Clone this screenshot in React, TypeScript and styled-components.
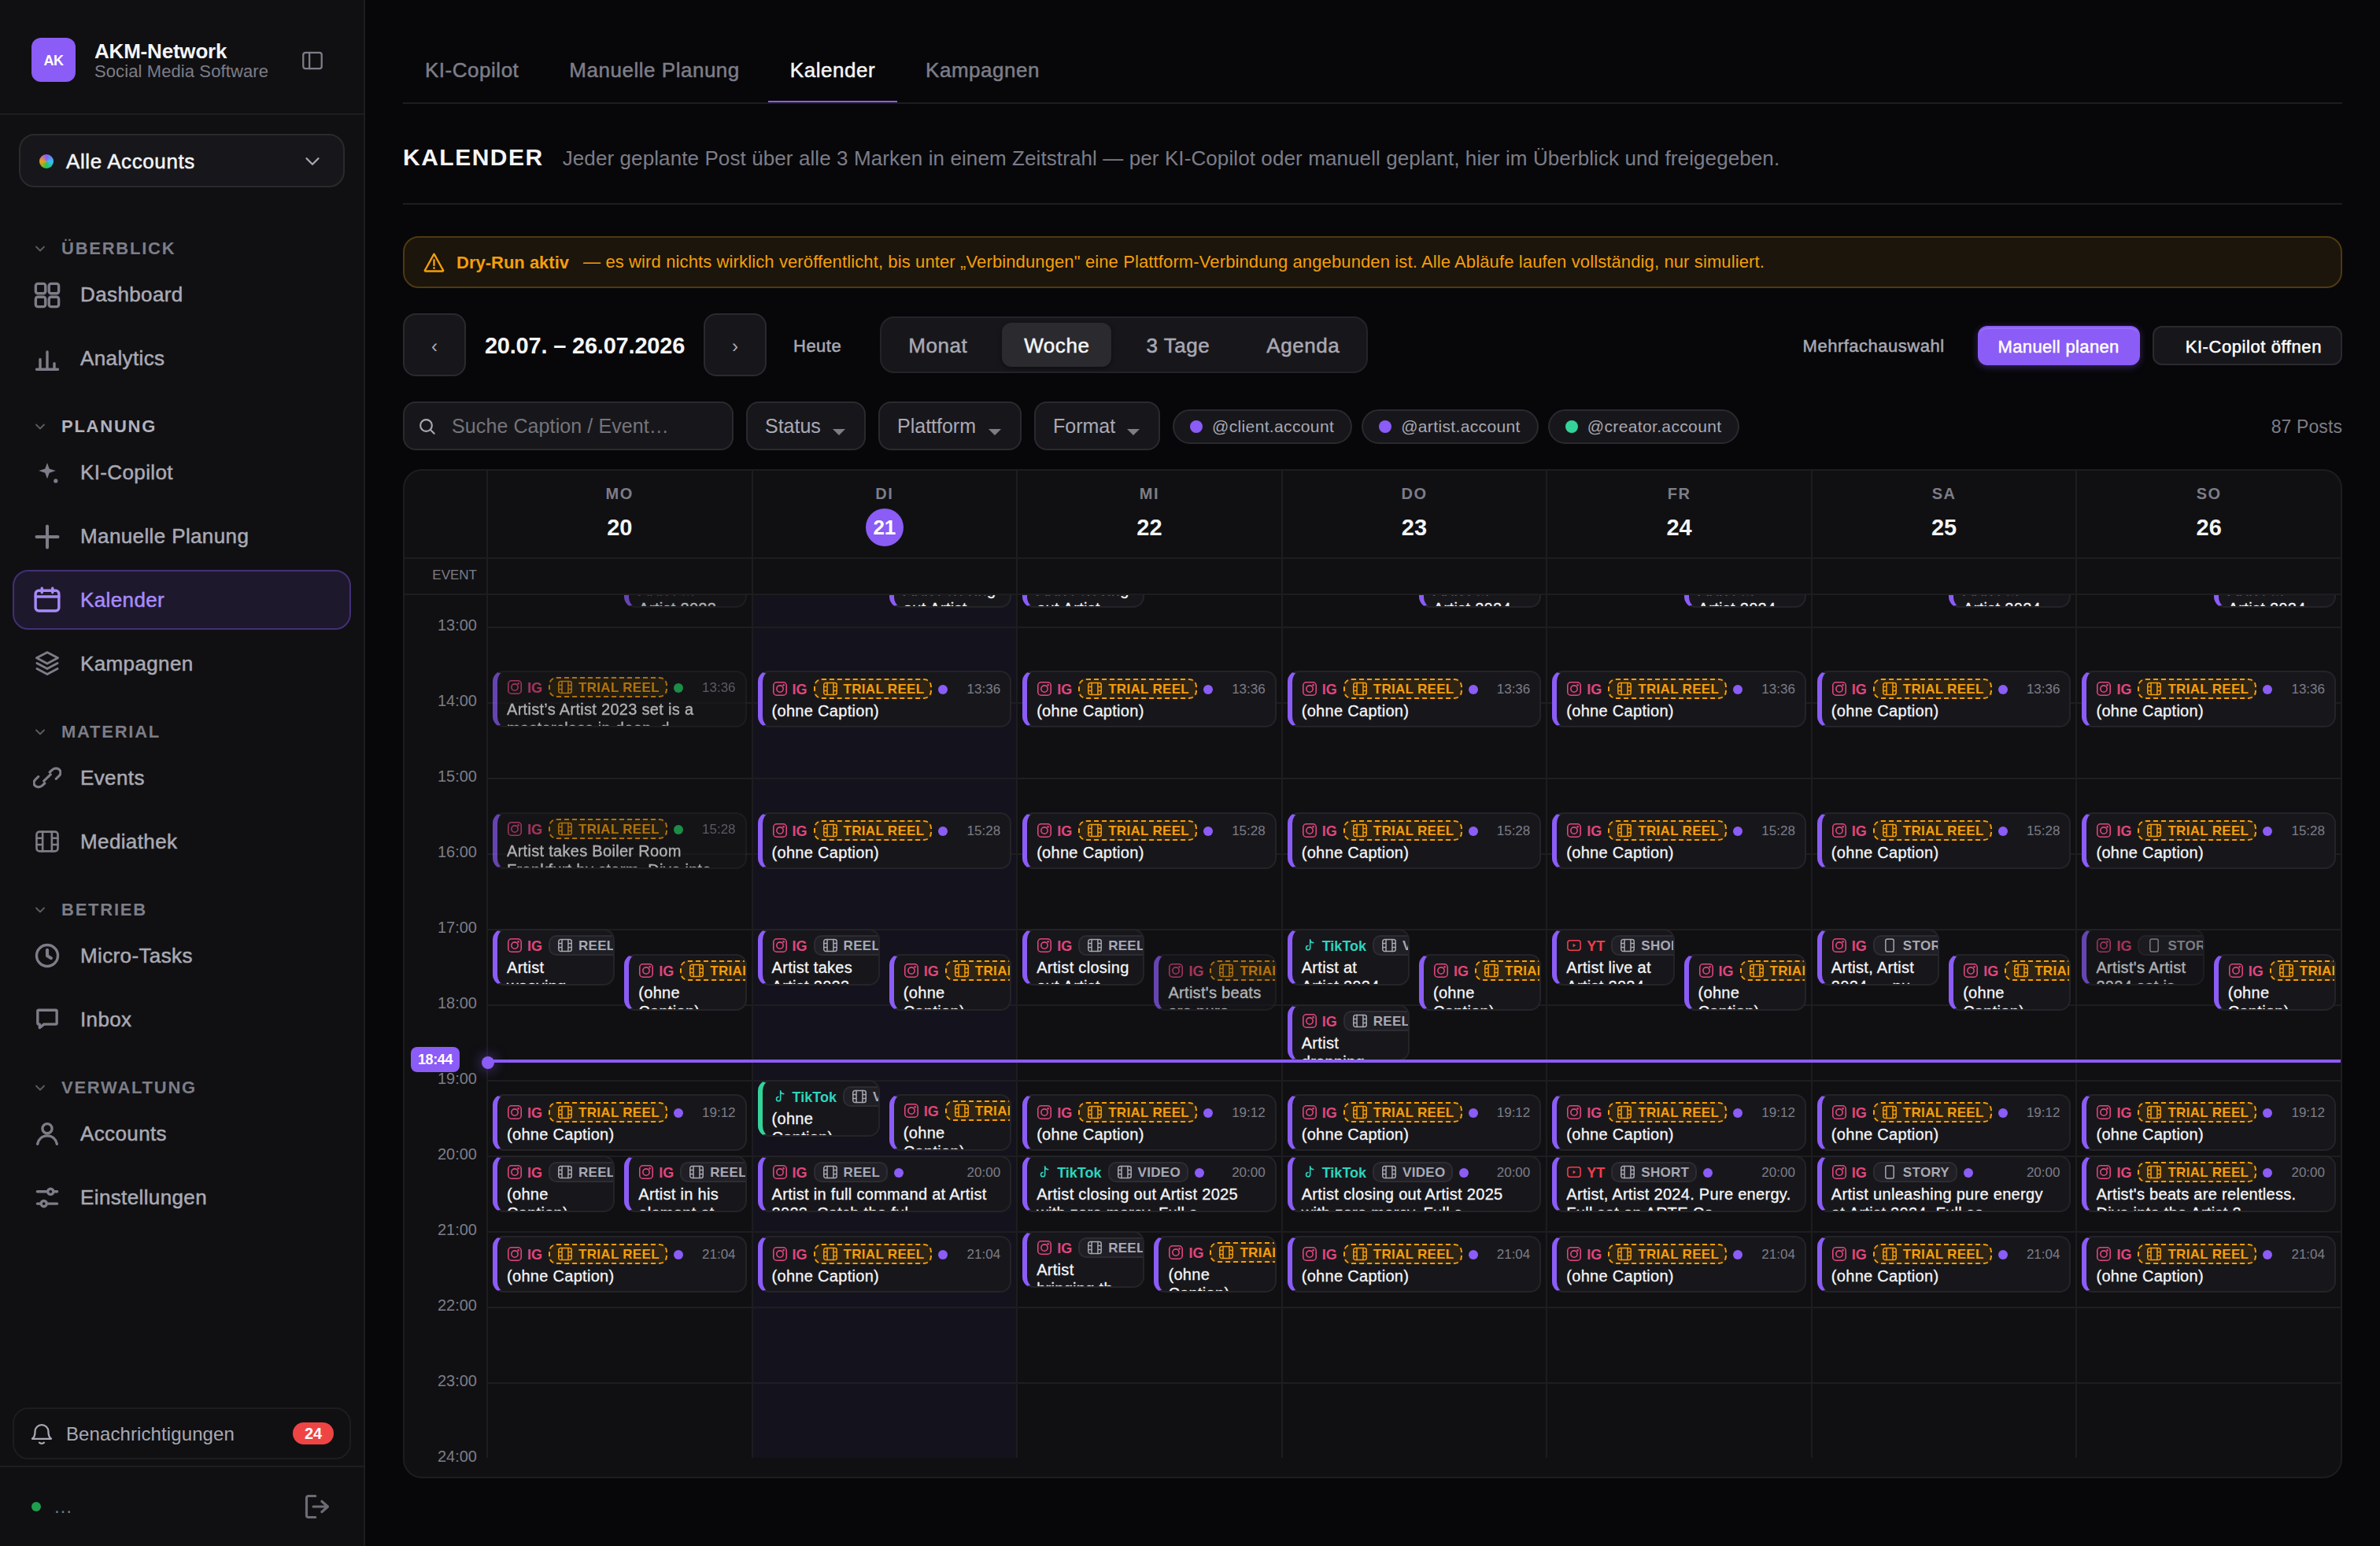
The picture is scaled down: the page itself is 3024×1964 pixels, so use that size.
import React from 'react';
import styled, { createGlobalStyle, css } from 'styled-components';

const colors = {
  page: '#070709',
  panel: '#101012',
  raised: '#17171b',
  line: '#1d1d20',
  lineStrong: '#2a2a2e',
  text: '#f5f5f7',
  soft: '#a9a9b4',
  muted: '#7d7d88',
  accent: '#8b5cf6',
  accentSoft: '#a78bfa',
  amber: '#f59e0b',
  green: '#34d399',
};

const GlobalStyle = createGlobalStyle`
  * { box-sizing: border-box; }
  html, body { margin: 0; background: ${colors.page}; }
  body {
    font-family: "Liberation Sans", Arial, sans-serif;
    color: ${colors.text};
    overflow: hidden;
  }
  svg { display: block; flex: none; }
`;

const medium = css`
  -webkit-text-stroke: 0.5px currentColor;
`;

/* ---------- icons ---------- */

const iconPaths: Record<string, React.ReactNode> = {
  grid: (
    <>
      <rect x="1.5" y="1.5" width="5.5" height="5.5" rx="1.2" />
      <rect x="9" y="1.5" width="5.5" height="5.5" rx="1.2" />
      <rect x="1.5" y="9" width="5.5" height="5.5" rx="1.2" />
      <rect x="9" y="9" width="5.5" height="5.5" rx="1.2" />
    </>
  ),
  chart: <path d="M2 13.9h12M4 13.9V8.2M8 13.9V4M12 13.9v-3.4" />,
  spark: (
    <>
      <path
        d="M8 2.2l1.2 3.3 3.6 1.2-3.6 1.2L8 11.2 6.8 7.9 3.2 6.7l3.6-1.2z"
        fill="currentColor"
        stroke="none"
      />
      <circle cx="12.8" cy="12.4" r="1.15" fill="currentColor" stroke="none" />
    </>
  ),
  plus: <path d="M8 2v12M2 8h12" strokeWidth="1.8" />,
  calendar: (
    <>
      <rect x="1.4" y="2.8" width="13.2" height="11.4" rx="1.8" />
      <path d="M1.4 6.2h13.2M5 1.4v2.5M11 1.4v2.5" />
    </>
  ),
  layers: (
    <path d="M8 1.7l6 3.1-6 3.2-6-3.2zM2.2 7.8L8 10.9l5.8-3.1M2.2 10.9L8 14l5.8-3.1" strokeWidth="1.3" />
  ),
  link: (
    <path
      d="M6.1 9.8L9.9 6.2M3 7.4L1.4 8.9C.2 10 .2 11.6 1.1 12.5c1 1 2.8 1 4 0l1.5-1.4M13 8.6l1.6-1.5c1.2-1.1 1.2-2.7.3-3.6-1-1-2.8-1-4 0L9.4 4.9"
      strokeWidth="1.4"
    />
  ),
  film: (
    <>
      <rect x="2" y="2.5" width="12" height="11" rx="1.6" />
      <path d="M5.4 2.5v11M10.6 2.5v11M2 6.1h3.4M2 9.8h3.4M10.6 6.1H14M10.6 9.8H14" />
    </>
  ),
  clock: (
    <>
      <circle cx="8" cy="8" r="6" />
      <path d="M8 4.8v3.3l2.2 1.3" strokeWidth="1.8" />
    </>
  ),
  chat: <path d="M3.2 2.8h9.6a.6.6 0 0 1 .6.6v6.7a.6.6 0 0 1-.6.6H6.2l-2.5 2v-2h-.5a.6.6 0 0 1-.6-.6V3.4a.6.6 0 0 1 .6-.6z" />,
  user: (
    <>
      <circle cx="8" cy="5.2" r="2.7" />
      <path d="M2.5 13.9c.7-2.9 2.8-4.6 5.5-4.6s4.8 1.7 5.5 4.6" />
    </>
  ),
  sliders: (
    <>
      <path d="M2.4 4.8h5.8M11.5 4.8h2.1M2.4 11.6h2.1M7.7 11.6h5.9" />
      <circle cx="9.9" cy="4.8" r="1.6" />
      <circle cx="6.1" cy="11.6" r="1.6" />
    </>
  ),
  logout: <path d="M7 2H3a1 1 0 0 0-1 1v10a1 1 0 0 0 1 1h4M5.8 8h8M10.6 5l3.4 3-3.4 3" />,
  sidebar: (
    <>
      <rect x="1.3" y="2.2" width="13.4" height="11.6" rx="1.6" />
      <path d="M5.8 2.2v11.6" />
    </>
  ),
  chevron: <path d="M3 5.5l5 5 5-5" />,
  bell: (
    <>
      <path d="M1.6 11.6h12.8c-1.4-1-1.9-2.4-1.9-5A4.5 4.5 0 0 0 8 2.2a4.5 4.5 0 0 0-4.5 4.4c0 2.6-.5 4-1.9 5z" />
      <path d="M6.4 14.2c.9.8 2.3.8 3.2 0" />
    </>
  ),
  warning: (
    <>
      <path d="M8 1.6l6.9 12.3a.4.4 0 0 1-.4.6H1.5a.4.4 0 0 1-.4-.6z" />
      <path d="M8 6v4M8 12v.3" />
    </>
  ),
  search: (
    <>
      <circle cx="7" cy="7" r="4.9" />
      <path d="M10.8 10.8l3 3" />
    </>
  ),
  ig: (
    <>
      <rect x="0.7" y="0.7" width="14.6" height="14.6" rx="3.6" />
      <circle cx="8" cy="8" r="3.7" />
      <circle cx="12.1" cy="3.8" r="0.5" fill="currentColor" />
    </>
  ),
  yt: (
    <>
      <rect x="0.8" y="2.5" width="14.4" height="11" rx="2.6" />
      <path d="M6.8 6l3.2 2-3.2 2z" fill="currentColor" stroke="none" />
    </>
  ),
  tiktok: <path d="M8.6 1.6v9.2a2.3 2.3 0 1 1-2.3-2.3M8.6 1.6c.3 2 1.5 3.2 3.6 3.4" />,
  filmSmall: (
    <>
      <rect x="0.7" y="1.3" width="14.6" height="13.4" rx="2.2" />
      <path d="M4.5 1.3v13.4M11.5 1.3v13.4M.7 5.7h3.8M.7 10.3h3.8M11.5 5.7h3.8M11.5 10.3h3.8" />
    </>
  ),
  phone: <rect x="3.4" y="0.8" width="9.2" height="14.4" rx="1.8" />,
};

const Icon = ({ name, size, stroke = 1.4 }: { name: string; size: number; stroke?: number }) => (
  <svg
    width={size}
    height={size}
    viewBox="0 0 16 16"
    fill="none"
    stroke="currentColor"
    strokeWidth={stroke}
    strokeLinecap="round"
    strokeLinejoin="round"
  >
    {iconPaths[name]}
  </svg>
);

/* ---------- sidebar ---------- */

const Shell = styled.div`
  display: flex;
  width: 3024px;
  height: 1964px;
  background: ${colors.page};
`;

const Sidebar = styled.aside`
  display: flex;
  flex-direction: column;
  flex: none;
  width: 464px;
  background: ${colors.panel};
  border-right: 2px solid ${colors.line};
`;

const Brand = styled.div`
  display: flex;
  align-items: center;
  height: 146px;
  padding: 8px 51px 0 40px;
  border-bottom: 2px solid ${colors.line};
`;

const BrandMark = styled.div`
  display: grid;
  place-items: center;
  width: 56px;
  height: 56px;
  margin-right: 24px;
  padding-top: 2px;
  border-radius: 12px;
  background: ${colors.accent};
  color: #fff;
  font-size: 18px;
  font-weight: 700;
  letter-spacing: -0.6px;
`;

const BrandText = styled.div`
  flex: 1;
  padding-top: 3px;
  line-height: 26px;
  white-space: nowrap;
  font-size: 22px;
  letter-spacing: 0.1px;
  color: ${colors.muted};

  strong {
    display: block;
    font-size: 26px;
    letter-spacing: -0.2px;
    color: ${colors.text};
  }
`;

const BrandToggle = styled.span`
  padding-top: 2px;
  color: ${colors.muted};
`;

const AccountSelect = styled.div`
  display: flex;
  align-items: center;
  height: 68px;
  margin: 24px 24px 0;
  padding: 2px 27px 0 24px;
  border: 2px solid ${colors.lineStrong};
  border-radius: 20px;
  background: ${colors.raised};
  font-size: 26px;
  letter-spacing: 0.6px;
  ${medium}

  span { flex: 1; }
  svg { color: ${colors.soft}; }
`;

const RainbowDot = styled.i`
  width: 18px;
  height: 18px;
  margin-right: 16px;
  border-radius: 50%;
  background: conic-gradient(#8b5cf6, #38bdf8, #22c55e, #f59e0b, #8b5cf6);
`;

const Nav = styled.nav`
  flex: 1;
  padding: 62px 16px 0;
`;

const NavGroup = styled.div`
  display: flex;
  flex-direction: column;
  gap: 4px;
  margin-bottom: 32.5px;
`;

const NavHeading = styled.div<{ $bright?: boolean }>`
  display: flex;
  align-items: center;
  gap: 19px;
  height: 32px;
  padding-left: 27px;
  font-size: 22px;
  font-weight: 700;
  letter-spacing: 1.75px;
  color: ${(p) => (p.$bright ? '#b2b2bd' : colors.muted)};

  svg { color: #5c5c64; }
`;

const NavItem = styled.div<{ $active?: boolean }>`
  display: flex;
  align-items: center;
  gap: 24px;
  height: 76.75px;
  padding: 1px 24px 0;
  border: 2px solid ${(p) => (p.$active ? '#432f75' : 'transparent')};
  border-radius: 20px;
  background: ${(p) => (p.$active ? '#1e182d' : 'transparent')};
  color: ${(p) => (p.$active ? colors.accentSoft : colors.soft)};
  font-size: 26px;
  letter-spacing: 0.38px;
  ${medium}

  svg { color: ${(p) => (p.$active ? colors.accentSoft : colors.muted)}; }
`;

const Notifications = styled.div`
  display: flex;
  align-items: center;
  height: 66px;
  margin: 0 16px 8px;
  padding: 0 20px;
  border: 2px solid ${colors.line};
  border-radius: 20px;
  font-size: 24px;
  color: ${colors.soft};

  span { flex: 1; margin-left: 16px; padding-top: 1px; letter-spacing: 0.1px; }
`;

const CountBadge = styled.b`
  display: grid;
  place-items: center;
  width: 52px;
  height: 28px;
  border-radius: 14px;
  background: #ef4444;
  color: #fff;
  font-size: 20px;
`;

const SidebarFooter = styled.div`
  display: flex;
  align-items: center;
  height: 102px;
  padding: 0 41px 0 40px;
  border-top: 2px solid ${colors.line};
  color: ${colors.muted};
  font-size: 24px;

  span { flex: 1; margin-left: 16px; }
  svg { color: #6c6c75; }
`;

const OnlineDot = styled.i`
  width: 12px;
  height: 12px;
  border-radius: 50%;
  background: #1f9f4e;
`;

/* ---------- main column ---------- */

const Main = styled.main`
  flex: 1;
  min-width: 0;
  padding: 46px 48px 0;
`;

const Tabs = styled.div`
  display: flex;
  gap: 8px;
  height: 86px;
  border-bottom: 2px solid ${colors.line};
`;

const Tab = styled.div<{ $active?: boolean }>`
  display: flex;
  align-items: center;
  padding: 5px 28px 0;
  border-bottom: 2px solid ${(p) => (p.$active ? colors.accent : 'transparent')};
  color: ${(p) => (p.$active ? colors.text : colors.muted)};
  font-size: 26px;
  letter-spacing: 0.52px;
  white-space: nowrap;
  ${medium}
`;

const PageHeader = styled.header`
  display: flex;
  align-items: baseline;
  gap: 24px;
  height: 128px;
  padding-top: 51px;
  border-bottom: 2px solid ${colors.line};
  margin-bottom: 40px;
  white-space: nowrap;

  h1 {
    margin: 0;
    font-size: 30px;
    line-height: 34px;
    letter-spacing: 1.5px;
  }

  p {
    margin: 0;
    font-size: 26px;
    letter-spacing: 0.1px;
    color: ${colors.muted};
  }
`;

const Banner = styled.div`
  display: flex;
  align-items: center;
  height: 66px;
  margin-bottom: 32px;
  padding: 0 24px;
  border: 2px solid #4f390f;
  border-radius: 20px;
  background: #1b150c;
  color: ${colors.amber};
  font-size: 22px;
  letter-spacing: 0.12px;
  white-space: nowrap;

  b { margin: 2px 18px 0 15px; letter-spacing: 0; }
`;

const Toolbar = styled.div`
  display: flex;
  align-items: center;
  height: 80px;
  margin-bottom: 32px;
  white-space: nowrap;
`;

const ArrowButton = styled.div`
  display: grid;
  place-items: center;
  width: 80px;
  height: 80px;
  padding-top: 4px;
  border: 2px solid ${colors.lineStrong};
  border-radius: 16px;
  background: ${colors.raised};
  color: ${colors.soft};
  font-size: 24px;
`;

const RangeLabel = styled.b`
  width: 302px;
  padding-top: 2px;
  text-align: center;
  font-size: 29px;
  letter-spacing: -0.2px;
`;

const QuietButton = styled.span<{ $inset?: number }>`
  margin-left: ${(p) => p.$inset || 0}px;
  padding-top: 3px;
  font-size: 22px;
  letter-spacing: 0.5px;
  color: ${colors.soft};
  ${medium}
`;

const Segmented = styled.div`
  display: flex;
  gap: 16px;
  height: 72px;
  margin-left: 49px;
  padding: 6px;
  border: 2px solid #242428;
  border-radius: 18px;
  background: ${colors.raised};
`;

const Segment = styled.div<{ $active?: boolean }>`
  display: flex;
  align-items: center;
  padding: 2px 28px 0;
  border-radius: 12px;
  background: ${(p) => (p.$active ? '#2a2a2f' : 'transparent')};
  box-shadow: ${(p) => (p.$active ? '0 2px 6px rgba(0, 0, 0, 0.4)' : 'none')};
  color: ${(p) => (p.$active ? colors.text : colors.soft)};
  font-size: 26px;
  letter-spacing: 0.55px;
  ${medium}
`;

const Spacer = styled.div`
  flex: 1;
`;

const ActionButton = styled.div<{ $primary?: boolean }>`
  display: flex;
  align-items: center;
  height: 50px;
  margin-top: 2px;
  padding: 3px 24px 0 ${(p) => (p.$primary ? 24 : 40)}px;
  border: 2px solid ${(p) => (p.$primary ? colors.accent : colors.lineStrong)};
  border-radius: 12px;
  background: ${(p) => (p.$primary ? colors.accent : colors.raised)};
  box-shadow: ${(p) =>
    p.$primary ? 'inset 0 2px 0 rgba(255, 255, 255, 0.12), 0 2px 10px rgba(139, 92, 246, 0.35)' : 'none'};
  margin-left: ${(p) => (p.$primary ? 42 : 16)}px;
  color: #fff;
  font-size: 22px;
  letter-spacing: ${(p) => (p.$primary ? 0.35 : 0.58)}px;
  ${medium}
`;

const Filters = styled.div`
  display: flex;
  align-items: center;
  height: 62px;
  margin-bottom: 24px;
  white-space: nowrap;
`;

const SearchBox = styled.div`
  display: flex;
  align-items: center;
  gap: 19px;
  width: 420px;
  height: 62px;
  padding: 1px 0 0 17px;
  border: 2px solid ${colors.lineStrong};
  border-radius: 16px;
  background: ${colors.raised};
  color: #74747a;
  font-size: 25px;
  letter-spacing: 0.1px;

  svg { color: ${colors.soft}; }
`;

const FilterSelect = styled.div<{ $width: number }>`
  display: flex;
  align-items: center;
  justify-content: space-between;
  width: ${(p) => p.$width}px;
  height: 62px;
  margin-left: 16px;
  padding: 1px 24px 0 22px;
  border: 2px solid ${colors.lineStrong};
  border-radius: 16px;
  background: ${colors.raised};
  color: ${colors.soft};
  font-size: 25px;

  &::after {
    content: '';
    margin-top: 15px;
    border: 8px solid transparent;
    border-top-color: ${colors.muted};
    border-bottom-width: 0;
  }
`;

const AccountPill = styled.div<{ $dot: string; $first?: boolean }>`
  display: flex;
  align-items: center;
  gap: 12px;
  height: 44px;
  margin-top: 2px;
  margin-left: ${(p) => (p.$first ? 16 : 12)}px;
  padding: 0 21px 0 20px;
  border: 2px solid ${colors.lineStrong};
  border-radius: 22px;
  background: ${colors.raised};
  color: ${colors.soft};
  font-size: 21px;
  letter-spacing: 0.36px;

  &::before {
    content: '';
    width: 16px;
    height: 16px;
    border-radius: 50%;
    background: ${(p) => p.$dot};
  }
`;

const PostCount = styled.span`
  padding-top: 2px;
  font-size: 23px;
  letter-spacing: 0.1px;
  color: ${colors.muted};
`;

/* ---------- calendar ---------- */

const HOUR = 96;
const START = 12;

const CalendarBox = styled.section`
  height: 1282px;
  border: 2px solid ${colors.line};
  border-radius: 24px;
  background: ${colors.panel};
  overflow: hidden;
`;

const WeekGrid = styled.div`
  position: relative;
  display: grid;
  grid-template-columns: 104px repeat(7, 1fr);
`;

const HeadRow = styled(WeekGrid)`
  height: 112px;
  border-bottom: 2px solid ${colors.line};
`;

const EventRow = styled(WeekGrid)`
  height: 46px;
  border-bottom: 2px solid ${colors.line};
  font-size: 17px;
  line-height: 41px;
  text-align: right;
  color: ${colors.muted};

  > :first-child { padding-right: 12px; }
`;

const Cell = styled.div`
  border-left: 2px solid ${colors.line};
`;

const DayHead = styled(Cell)`
  display: flex;
  flex-direction: column;
  align-items: center;
  padding-top: 17px;
  font-size: 20px;
  line-height: 24px;
  font-weight: 700;
  letter-spacing: 1.6px;
  color: ${colors.muted};
`;

const DayNumber = styled.div<{ $today?: boolean }>`
  display: grid;
  place-items: center;
  width: 48px;
  height: 48px;
  margin-top: 7px;
  border-radius: 50%;
  background: ${(p) => (p.$today ? colors.accent : 'transparent')};
  color: ${(p) => (p.$today ? '#fff' : colors.text)};
  font-size: ${(p) => (p.$today ? 26 : 29)}px;
  letter-spacing: 0;
`;

const Scroller = styled.div`
  height: 1120px;
  overflow: hidden;
`;

/* scrolled so that 12:00 sits just above the fold */
const Timeline = styled(WeekGrid)`
  margin-top: -56px;
`;

const HourLabels = styled.div`
  padding-right: 12px;
  text-align: right;
  font-size: 20px;
  line-height: 24px;
  color: ${colors.muted};

  div {
    height: ${HOUR}px;
    transform: translateY(-14px);
  }
`;

const DayColumn = styled.div<{ $today?: boolean }>`
  position: relative;
  height: ${HOUR * 12}px;
  border-left: 2px solid ${colors.line};
  background: ${(p) => (p.$today ? '#14121c' : 'transparent')};
`;

const HourSlot = styled.div`
  height: ${HOUR}px;
  border-top: 2px solid #1e1e22;
`;

const Card = styled.div<{ $top: number; $side?: 'left' | 'right'; $color: string; $past?: boolean; $roomy: boolean }>`
  position: absolute;
  top: ${(p) => p.$top}px;
  left: ${(p) => (p.$side === 'right' ? 'calc(50% + 6px)' : '6px')};
  right: ${(p) => (p.$side === 'left' ? 'calc(50% + 6px)' : '6px')};
  height: 72px;
  padding: ${(p) => (p.$roomy ? 8 : 6)}px 12px 0;
  border: 2px solid #242428;
  border-left: 6px solid ${(p) => p.$color};
  border-radius: 14px;
  background: ${colors.raised};
  overflow: hidden;
  white-space: pre;
  opacity: ${(p) => (p.$past ? 0.7 : 1)};
`;

const CardTop = styled.div`
  display: flex;
  align-items: center;
  height: 26px;
  gap: 8px;
`;

const Platform = styled.span<{ $color: string }>`
  display: flex;
  align-items: center;
  gap: 7px;
  margin-left: 1px;
  padding-top: 2px;
  color: ${(p) => p.$color};
  font-size: 18px;
  font-weight: 700;

  svg { margin-top: -2px; }
`;

const FormatChip = styled.span<{ $trial?: boolean }>`
  display: flex;
  align-items: center;
  flex: none;
  gap: 8px;
  height: 26px;
  padding: 2px 8px 0 10px;
  border: 2px ${(p) => (p.$trial ? `dashed ${colors.amber}` : 'solid #2c2c32')};
  border-radius: 10px;
  background: ${(p) => (p.$trial ? '#2f2414' : '#1f1f25')};
  color: ${(p) => (p.$trial ? colors.amber : colors.soft)};
  font-size: 17px;
  font-weight: 700;
  letter-spacing: 0.3px;

  svg { margin-top: -2px; }
`;

const StatusDot = styled.i<{ $color: string }>`
  flex: none;
  width: 12px;
  height: 12px;
  margin-top: 1px;
  border-radius: 50%;
  background: ${(p) => p.$color};
`;

const CardTime = styled.span`
  margin-left: auto;
  padding-top: 2px;
  font-size: 17px;
  color: ${colors.muted};
`;

const Caption = styled.div`
  margin-top: 3px;
  font-size: 20px;
  line-height: 24px;
  letter-spacing: 0.3px;
  color: ${colors.text};
  -webkit-text-stroke: 0.3px currentColor;
`;

const NowLine = styled.div`
  position: absolute;
  z-index: 2;
  top: 646px;
  left: 104px;
  right: 0;
  height: 4px;
  background: ${colors.accent};

  &::before {
    content: '';
    position: absolute;
    left: -6px;
    top: -4px;
    width: 16px;
    height: 16px;
    border-radius: 50%;
    background: ${colors.accent};
    box-shadow: 0 0 16px rgba(139, 92, 246, 0.6);
  }
`;

const NowLabel = styled.div`
  position: absolute;
  z-index: 2;
  top: 630px;
  left: 8px;
  width: 62px;
  height: 32px;
  border-radius: 8px;
  background: ${colors.accent};
  color: #fff;
  text-align: center;
  font-size: 18px;
  font-weight: 700;
  line-height: 32px;
  letter-spacing: -0.4px;
`;

/* ---------- data ---------- */

type Post = {
  time: string;
  platform: 'IG' | 'TikTok' | 'YT';
  format: 'TRIAL REEL' | 'REEL' | 'VIDEO' | 'SHORT' | 'STORY';
  caption: string;
  side?: 'left' | 'right';
  past?: boolean;
  published?: boolean;
  color?: string;
};

const NONE = '(ohne Caption)';
const NONE_NARROW = '(ohne\nCaption)';

const trial = (time: string): Post => ({ time, platform: 'IG', format: 'TRIAL REEL', caption: NONE });

const trialNarrow = (time: string): Post => ({
  time,
  platform: 'IG',
  format: 'TRIAL REEL',
  caption: NONE_NARROW,
  side: 'right',
});

const days: { name: string; date: number; today?: boolean; posts: Post[] }[] = [
  {
    name: 'MO',
    date: 20,
    posts: [
      { time: '12:00', platform: 'IG', format: 'REEL', caption: 'Artist at\nArtist 2023', side: 'right', past: true },
      { time: '13:36', platform: 'IG', format: 'TRIAL REEL', caption: 'Artist’s Artist 2023 set is a\nmasterclass in deep, d', past: true, published: true },
      { time: '15:28', platform: 'IG', format: 'TRIAL REEL', caption: 'Artist takes Boiler Room\nFrankfurt by storm. Dive into', past: true, published: true },
      { time: '17:00', platform: 'IG', format: 'REEL', caption: 'Artist\nweaving', side: 'left' },
      trialNarrow('17:20'),
      trial('19:12'),
      { time: '20:00', platform: 'IG', format: 'REEL', caption: NONE_NARROW, side: 'left' },
      { time: '20:00', platform: 'IG', format: 'REEL', caption: 'Artist in his\nelement at', side: 'right' },
      trial('21:04'),
    ],
  },
  {
    name: 'DI',
    date: 21,
    today: true,
    posts: [
      { time: '12:00', platform: 'IG', format: 'REEL', caption: 'Artist closing\nout Artist', side: 'right' },
      trial('13:36'),
      trial('15:28'),
      { time: '17:00', platform: 'IG', format: 'REEL', caption: 'Artist takes\nArtist 2023', side: 'left' },
      trialNarrow('17:20'),
      { time: '19:00', platform: 'TikTok', format: 'VIDEO', caption: NONE_NARROW, side: 'left', color: colors.green },
      trialNarrow('19:12'),
      { time: '20:00', platform: 'IG', format: 'REEL', caption: 'Artist in full command at Artist\n2023. Catch the ful' },
      trial('21:04'),
    ],
  },
  {
    name: 'MI',
    date: 22,
    posts: [
      { time: '12:00', platform: 'IG', format: 'REEL', caption: 'Artist closing\nout Artist', side: 'left' },
      trial('13:36'),
      trial('15:28'),
      { time: '17:00', platform: 'IG', format: 'REEL', caption: 'Artist closing\nout Artist', side: 'left' },
      { time: '17:20', platform: 'IG', format: 'TRIAL REEL', caption: "Artist's beats\nare pure", side: 'right', past: true },
      trial('19:12'),
      { time: '20:00', platform: 'TikTok', format: 'VIDEO', caption: 'Artist closing out Artist 2025\nwith zero mercy. Full s' },
      { time: '21:00', platform: 'IG', format: 'REEL', caption: 'Artist\nbringing th', side: 'left' },
      trialNarrow('21:04'),
    ],
  },
  {
    name: 'DO',
    date: 23,
    posts: [
      { time: '12:00', platform: 'IG', format: 'REEL', caption: 'Artist at\nArtist 2024', side: 'right' },
      trial('13:36'),
      trial('15:28'),
      { time: '17:00', platform: 'TikTok', format: 'VIDEO', caption: 'Artist at\nArtist 2024', side: 'left' },
      trialNarrow('17:20'),
      { time: '18:00', platform: 'IG', format: 'REEL', caption: 'Artist\ndropping', side: 'left' },
      trial('19:12'),
      { time: '20:00', platform: 'TikTok', format: 'VIDEO', caption: 'Artist closing out Artist 2025\nwith zero mercy. Full s' },
      trial('21:04'),
    ],
  },
  {
    name: 'FR',
    date: 24,
    posts: [
      { time: '12:00', platform: 'IG', format: 'REEL', caption: 'Artist at\nArtist 2024', side: 'right' },
      trial('13:36'),
      trial('15:28'),
      { time: '17:00', platform: 'YT', format: 'SHORT', caption: 'Artist live at\nArtist 2024', side: 'left' },
      trialNarrow('17:20'),
      trial('19:12'),
      { time: '20:00', platform: 'YT', format: 'SHORT', caption: 'Artist, Artist 2024. Pure energy.\nFull set on ARTE Co' },
      trial('21:04'),
    ],
  },
  {
    name: 'SA',
    date: 25,
    posts: [
      { time: '12:00', platform: 'IG', format: 'REEL', caption: 'Artist at\nArtist 2024', side: 'right' },
      trial('13:36'),
      trial('15:28'),
      { time: '17:00', platform: 'IG', format: 'STORY', caption: 'Artist, Artist\n2024 — pu', side: 'left' },
      trialNarrow('17:20'),
      trial('19:12'),
      { time: '20:00', platform: 'IG', format: 'STORY', caption: 'Artist unleashing pure energy\nat Artist 2024. Full se' },
      trial('21:04'),
    ],
  },
  {
    name: 'SO',
    date: 26,
    posts: [
      { time: '12:00', platform: 'IG', format: 'REEL', caption: 'Artist at\nArtist 2024', side: 'right' },
      trial('13:36'),
      trial('15:28'),
      { time: '17:00', platform: 'IG', format: 'STORY', caption: "Artist's Artist\n2024 set is", side: 'left', past: true },
      trialNarrow('17:20'),
      trial('19:12'),
      { time: '20:00', platform: 'IG', format: 'TRIAL REEL', caption: "Artist's beats are relentless.\nDive into the Artist 2" },
      trial('21:04'),
    ],
  },
];

const navGroups = [
  { title: 'ÜBERBLICK', items: [['grid', 'Dashboard'], ['chart', 'Analytics']] },
  {
    title: 'PLANUNG',
    bright: true,
    items: [['spark', 'KI-Copilot'], ['plus', 'Manuelle Planung'], ['calendar', 'Kalender'], ['layers', 'Kampagnen']],
  },
  { title: 'MATERIAL', items: [['link', 'Events'], ['film', 'Mediathek']] },
  { title: 'BETRIEB', items: [['clock', 'Micro-Tasks'], ['chat', 'Inbox']] },
  { title: 'VERWALTUNG', items: [['user', 'Accounts'], ['sliders', 'Einstellungen']] },
];

const platforms = {
  IG: { icon: 'ig', color: '#e1467c' },
  TikTok: { icon: 'tiktok', color: '#2dd4bf' },
  YT: { icon: 'yt', color: '#ef3e4e' },
};

// whole css pixels at 48px per hour, doubled
const offsetOf = (time: string) => {
  const [h, m] = time.split(':').map(Number);
  return (h - START) * HOUR + Math.floor(m * 0.8) * 2;
};

const PostCard = ({ post }: { post: Post }) => {
  const platform = platforms[post.platform];
  return (
    <Card
      $top={offsetOf(post.time)}
      $side={post.side}
      $color={post.color || colors.accent}
      $past={post.past}
      $roomy={!post.caption.includes('\n')}
    >
      <CardTop>
        <Platform $color={platform.color}>
          <Icon name={platform.icon} size={18} stroke={1.4} />
          {post.platform}
        </Platform>
        <FormatChip $trial={post.format === 'TRIAL REEL'}>
          <Icon name={post.format === 'STORY' ? 'phone' : 'filmSmall'} size={18} stroke={1.3} />
          {post.format}
        </FormatChip>
        {!post.side && (
          <>
            <StatusDot $color={post.published ? '#22c55e' : colors.accent} />
            <CardTime>{post.time}</CardTime>
          </>
        )}
      </CardTop>
      <Caption>{post.caption}</Caption>
    </Card>
  );
};

const SidebarNav = () => (
  <Sidebar>
    <Brand>
      <BrandMark>AK</BrandMark>
      <BrandText>
        <strong>AKM-Network</strong>
        Social Media Software
      </BrandText>
      <BrandToggle>
        <Icon name="sidebar" size={28} stroke={1.3} />
      </BrandToggle>
    </Brand>
    <AccountSelect>
      <RainbowDot />
      <span>Alle Accounts</span>
      <Icon name="chevron" size={24} stroke={1.5} />
    </AccountSelect>
    <Nav>
      {navGroups.map((group) => (
        <NavGroup key={group.title}>
          <NavHeading $bright={group.bright}>
            <Icon name="chevron" size={16} stroke={1.8} />
            {group.title}
          </NavHeading>
          {group.items.map(([icon, label]) => (
            <NavItem key={label} $active={label === 'Kalender'}>
              <Icon name={icon} size={36} stroke={icon === 'film' ? 1.15 : 1.5} />
              {label}
            </NavItem>
          ))}
        </NavGroup>
      ))}
    </Nav>
    <Notifications>
      <Icon name="bell" size={30} stroke={1.2} />
      <span>Benachrichtigungen</span>
      <CountBadge>24</CountBadge>
    </Notifications>
    <SidebarFooter>
      <OnlineDot />
      <span>…</span>
      <Icon name="logout" size={36} />
    </SidebarFooter>
  </Sidebar>
);

const Calendar = () => (
  <CalendarBox>
    <HeadRow>
      <div />
      {days.map((day) => (
        <DayHead key={day.name}>
          {day.name}
          <DayNumber $today={day.today}>{day.date}</DayNumber>
        </DayHead>
      ))}
    </HeadRow>
    <EventRow>
      <div>EVENT</div>
      {days.map((day) => (
        <Cell key={day.name} />
      ))}
    </EventRow>
    <Scroller>
      <Timeline>
        <HourLabels>
          {Array.from({ length: 13 }, (_, i) => (
            <div key={i}>{START + i}:00</div>
          ))}
        </HourLabels>
        {days.map((day) => (
          <DayColumn key={day.name} $today={day.today}>
            {Array.from({ length: 12 }, (_, i) => (
              <HourSlot key={i} />
            ))}
            {day.posts.map((post, i) => (
              <PostCard key={i} post={post} />
            ))}
          </DayColumn>
        ))}
        <NowLine />
        <NowLabel>18:44</NowLabel>
      </Timeline>
    </Scroller>
  </CalendarBox>
);

const App = () => (
  <>
    <GlobalStyle />
    <Shell>
      <SidebarNav />
      <Main>
        <Tabs>
          {['KI-Copilot', 'Manuelle Planung', 'Kalender', 'Kampagnen'].map((tab) => (
            <Tab key={tab} $active={tab === 'Kalender'}>
              {tab}
            </Tab>
          ))}
        </Tabs>
        <PageHeader>
          <h1>KALENDER</h1>
          <p>Jeder geplante Post über alle 3 Marken in einem Zeitstrahl — per KI-Copilot oder manuell geplant, hier im Überblick und freigegeben.</p>
        </PageHeader>
        <Banner>
          <Icon name="warning" size={27} stroke={1.4} />
          <b>Dry-Run aktiv</b>
          — es wird nichts wirklich veröffentlicht, bis unter „Verbindungen" eine Plattform-Verbindung angebunden ist. Alle Abläufe laufen vollständig, nur simuliert.
        </Banner>
        <Toolbar>
          <ArrowButton>‹</ArrowButton>
          <RangeLabel>20.07. – 26.07.2026</RangeLabel>
          <ArrowButton>›</ArrowButton>
          <QuietButton $inset={34}>Heute</QuietButton>
          <Segmented>
            {['Monat', 'Woche', '3 Tage', 'Agenda'].map((view) => (
              <Segment key={view} $active={view === 'Woche'}>
                {view}
              </Segment>
            ))}
          </Segmented>
          <Spacer />
          <QuietButton>Mehrfachauswahl</QuietButton>
          <ActionButton $primary>Manuell planen</ActionButton>
          <ActionButton>KI-Copilot öffnen</ActionButton>
        </Toolbar>
        <Filters>
          <SearchBox>
            <Icon name="search" size={24} stroke={1.4} />
            Suche Caption / Event…
          </SearchBox>
          <FilterSelect $width={152}>Status</FilterSelect>
          <FilterSelect $width={182}>Plattform</FilterSelect>
          <FilterSelect $width={160}>Format</FilterSelect>
          <AccountPill $dot={colors.accent} $first>@client.account</AccountPill>
          <AccountPill $dot={colors.accent}>@artist.account</AccountPill>
          <AccountPill $dot={colors.green}>@creator.account</AccountPill>
          <Spacer />
          <PostCount>87 Posts</PostCount>
        </Filters>
        <Calendar />
      </Main>
    </Shell>
  </>
);

export default App;
